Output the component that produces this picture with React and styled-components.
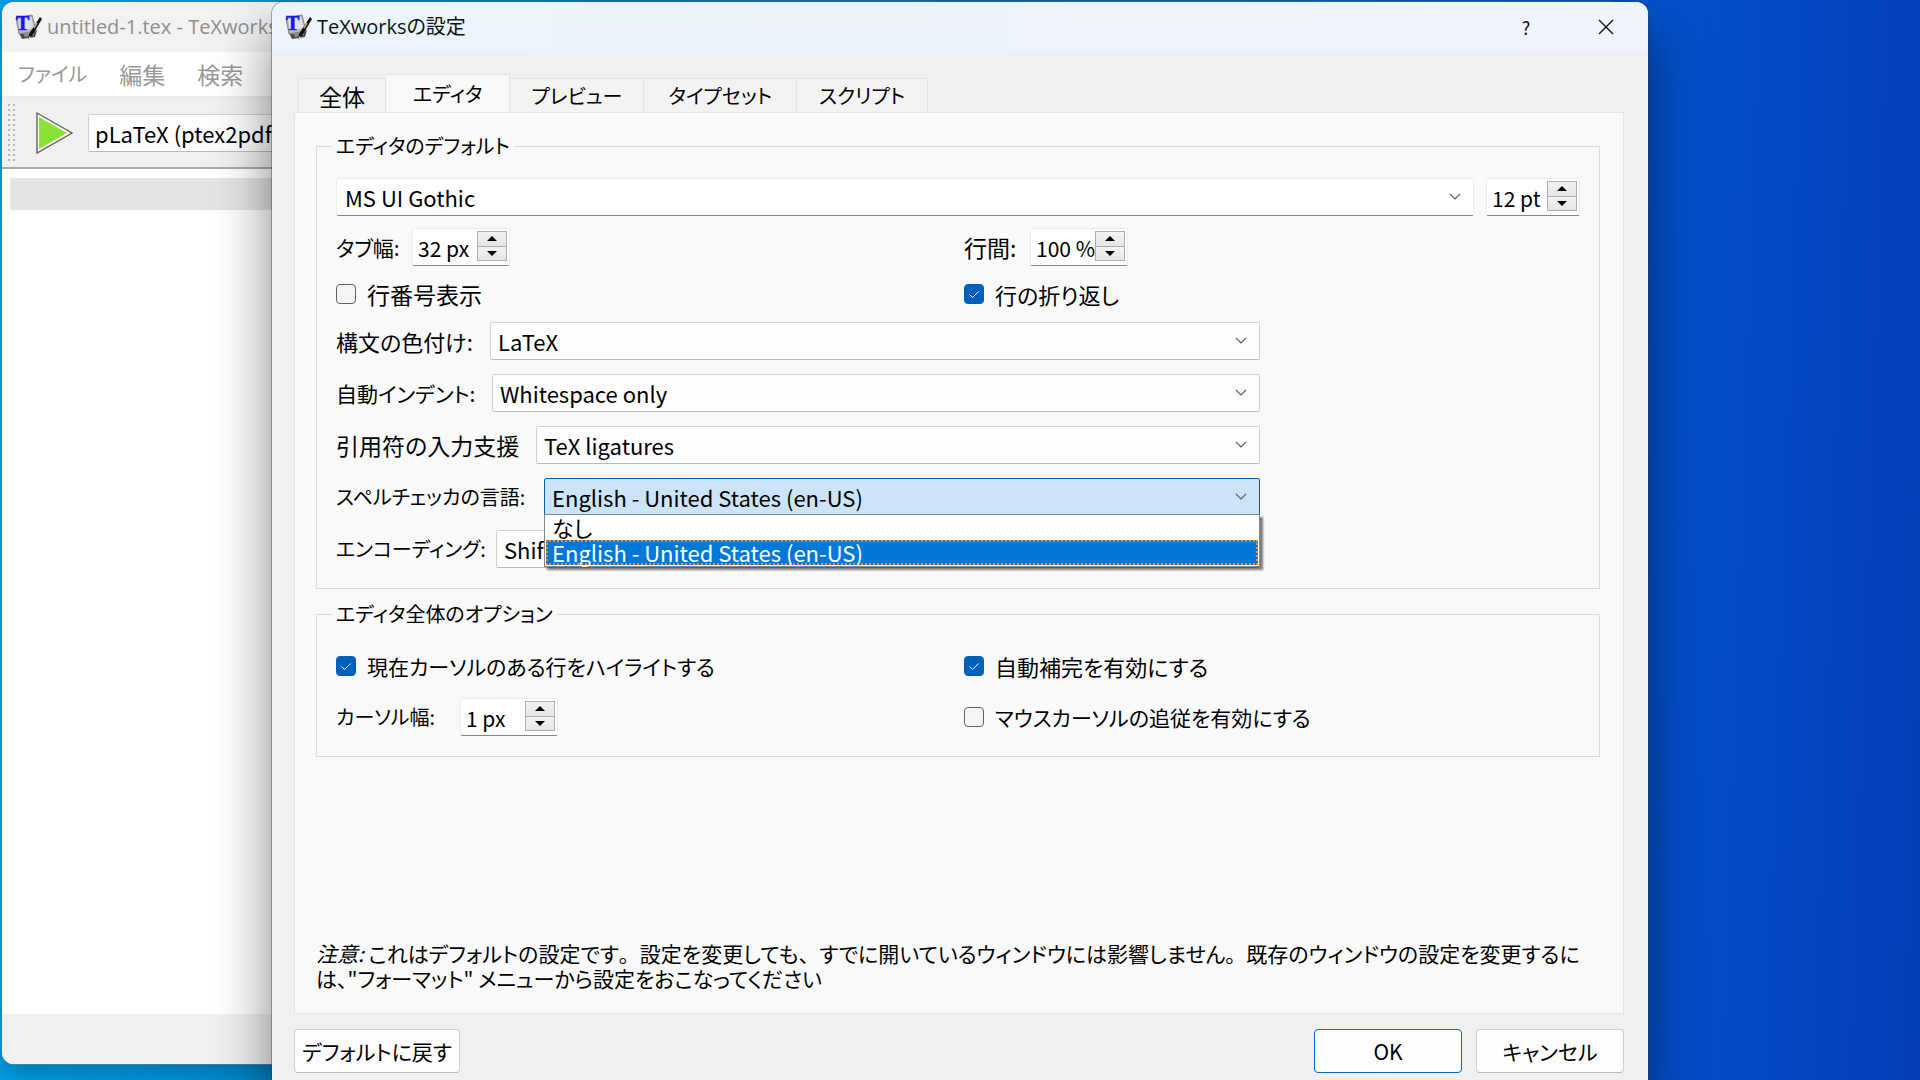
import React, { useState } from 'react';
import styled, { createGlobalStyle, css } from 'styled-components';

const SYNTAX = ['LaTeX', 'ConTeXt', 'BibTeX'];
const INDENT = ['Whitespace only', 'None'];
const QUOTES = ['TeX ligatures', 'Unicode characters'];
const ENCODINGS = ['Shift-JIS', 'UTF-8', 'EUC-JP'];
const LANGUAGES = ['なし', 'English - United States (en-US)'];

const TABS = [
	{ name: '全体', size: 23, pad: 20 },
	{ name: 'エディタ', size: 20, pad: 27 },
	{ name: 'プレビュー', size: 20, pad: 21 },
	{ name: 'タイプセット', size: 20, pad: 24 },
	{ name: 'スクリプト', size: 20, pad: 22 },
];

const AppIcon = () => (
	<Glyph width="28" height="28" viewBox="0 0 28 28" aria-hidden="true">
		<path d="M3 18 L7 26 L20 24 L22 17 Z" fill="#4c4c4c" />
		<path d="M8 20 L19 18 L19 22 L10 24 Z" fill="#8b8f93" />
		<path d="M1 5 L17 2 L21 18 L4 21 Z" fill="#b4b8bd" stroke="#84888c" strokeWidth="1" />
		<path d="M3 6 L16 4 L19 15 L5 18 Z" fill="#dfe1e4" />
		<text x="1" y="17" fontFamily="Liberation Serif, serif" fontWeight="bold" fontSize="20" fill="#1818e8" stroke="#1818e8" strokeWidth="0.6">T</text>
		<path d="M25 4 L27 6 L17 23 L13 26 L14 21 Z" fill="#111" />
		<path d="M22 10 L19 15" stroke="#c9b458" strokeWidth="1.5" />
		<path d="M14 23 L16 24 L13 27 Z" fill="#d8c069" />
	</Glyph>
);

const Chevron = () => (
	<ChevronSvg width="12" height="8" viewBox="0 0 12 8" aria-hidden="true">
		<path d="M1 1 L6 6 L11 1" fill="none" stroke="#5f5f5f" strokeWidth="1.2" />
	</ChevronSvg>
);

const Arrow = ({ down }) => (
	<Glyph width="10" height="5" viewBox="0 0 10 5" aria-hidden="true">
		<path d={down ? 'M0 0 H10 L5 5 Z' : 'M0 5 H10 L5 0 Z'} fill="#000" />
	</Glyph>
);

const Combo = ({ id, label, options, edit, open, value, children }) => (
	<ComboBox>
		<Select id={id} aria-label={label} $edit={edit} $open={open} defaultValue={value || options[0]}>
			{options.map(o => <option key={o}>{o}</option>)}
		</Select>
		<Chevron />
		{children}
	</ComboBox>
);

const Spin = ({ id, start, unit, width, label }) => {
	const [value, setValue] = useState(start);
	return (
		<SpinBox $width={width}>
			<SpinInput id={id} aria-label={label} value={value + ' ' + unit} onChange={e => setValue(parseInt(e.target.value) || 0)} />
			<SpinButtons>
				<SpinButton type="button" aria-label="増やす" onClick={() => setValue(value + 1)}><Arrow /></SpinButton>
				<SpinButton type="button" aria-label="減らす" onClick={() => setValue(value - 1)}><Arrow down /></SpinButton>
			</SpinButtons>
		</SpinBox>
	);
};

const Check = ({ children, checked, size }) => (
	<CheckLabel $size={size}>
		<CheckInput type="checkbox" defaultChecked={checked} />
		<span>{children}</span>
	</CheckLabel>
);

const EditorWindow = () => (
	<BackWindow>
		<TitleBar $inactive>
			<AppIcon />
			<Title>untitled-1.tex - TeXworks</Title>
		</TitleBar>
		<MenuBar>
			<MenuItem $size={20}>ファイル</MenuItem>
			<MenuItem $size={23}>編集</MenuItem>
			<MenuItem $size={23}>検索</MenuItem>
		</MenuBar>
		<Toolbar>
			<Grip />
			<RunButton type="button" aria-label="タイプセット">
				<Glyph width="38" height="44" viewBox="0 0 38 44">
					<path d="M1 2 L36 22 L1 42 Z" fill="#fff" stroke="#5d6652" strokeWidth="1.4" />
					<path d="M3 6 L31 22 L3 38 Z" fill="#8ae234" />
				</Glyph>
			</RunButton>
			<EngineSelect aria-label="タイプセットエンジン">
				<option>pLaTeX (ptex2pdf)</option>
			</EngineSelect>
		</Toolbar>
		<Document>
			<CurrentLine />
		</Document>
		<StatusBar />
	</BackWindow>
);

const Preferences = () => {
	const [lang, setLang] = useState(LANGUAGES[1]);

	return (
		<Dialog role="dialog" aria-label="TeXworksの設定">
			<TitleBar>
				<AppIcon />
				<Title>TeXworksの設定</Title>
				<WindowButton type="button" aria-label="ヘルプ">?</WindowButton>
				<WindowButton type="button" aria-label="閉じる">
					<Glyph width="16" height="16" viewBox="0 0 16 16">
						<path d="M1 1 L15 15 M15 1 L1 15" stroke="#111" strokeWidth="1.4" />
					</Glyph>
				</WindowButton>
			</TitleBar>

			<Body>
				<TabBar role="tablist">
					{TABS.map((t, i) => (
						<Tab key={t.name} type="button" role="tab" aria-selected={i === 1} $selected={i === 1} $size={t.size} $pad={t.pad}>{t.name}</Tab>
					))}
				</TabBar>

				<Panel role="tabpanel">
					<Group>
						<Legend>エディタのデフォルト</Legend>
						<Rows>
							<FontRow>
								<Combo edit options={['MS UI Gothic']} label="フォント" />
								<Spin start={12} unit="pt" width={94} label="フォントサイズ" />
							</FontRow>
							<Columns>
								<Field $gap={20}>
									<Label htmlFor="tab" $width={56}>タブ幅:</Label>
									<Spin id="tab" start={32} unit="px" width={98} />
								</Field>
								<Field $gap={12}>
									<Label htmlFor="spacing" $width={54} $size={23}>行間:</Label>
									<Spin id="spacing" start={100} unit="%" width={98} />
								</Field>
							</Columns>
							<Columns>
								<Check size={23}>行番号表示</Check>
								<Check size={22} checked>行の折り返し</Check>
							</Columns>
						</Rows>
						<ComboRows>
							<Field $gap={12}>
								<Label htmlFor="syntax" $width={142} $size={22}>構文の色付け:</Label>
								<Combo id="syntax" options={SYNTAX} />
							</Field>
							<Field $gap={12}>
								<Label htmlFor="indent" $width={144}>自動インデント:</Label>
								<Combo id="indent" options={INDENT} />
							</Field>
							<Field $gap={12}>
								<Label htmlFor="quotes" $width={188} $size={23}>引用符の入力支援</Label>
								<Combo id="quotes" options={QUOTES} />
							</Field>
							<Field $gap={12}>
								<Label htmlFor="lang" $width={196} $size={20}>スペルチェッカの言語:</Label>
								<Combo id="lang" options={LANGUAGES} value={LANGUAGES[1]} open>
									<Popup role="listbox">
										{LANGUAGES.map(l => (
											<Option key={l} role="option" aria-selected={l === lang} $selected={l === lang} onClick={() => setLang(l)}>{l}</Option>
										))}
									</Popup>
								</Combo>
							</Field>
							<Field $gap={12}>
								<Label htmlFor="encoding" $width={148} $size={20}>エンコーディング:</Label>
								<Combo id="encoding" options={ENCODINGS} />
							</Field>
						</ComboRows>
					</Group>

					<Group>
						<Legend>エディタ全体のオプション</Legend>
						<Columns $tall>
							<Check checked>現在カーソルのある行をハイライトする</Check>
							<Check size={22} checked>自動補完を有効にする</Check>
						</Columns>
						<Columns $spaced>
							<Field $gap={20}>
								<Label htmlFor="cursor" $width={104} $size={20}>カーソル幅:</Label>
								<Spin id="cursor" start={1} unit="px" width={98} />
							</Field>
							<Check>マウスカーソルの追従を有効にする</Check>
						</Columns>
					</Group>

					<Note>
						<em>注意:</em> これはデフォルトの設定です<Stop>。</Stop>設定を変更しても<Stop>、</Stop>すでに開いているウィンドウには影響しません<Stop>。</Stop>既存のウィンドウの設定を変更するに<br />
						は、"フォーマット" メニューから設定をおこなってください
					</Note>
				</Panel>

				<Footer>
					<Button type="button" $width={166}>デフォルトに戻す</Button>
					<Spacer />
					<Button type="button" $width={148} $primary>OK</Button>
					<Button type="button" $width={148}>キャンセル</Button>
				</Footer>
			</Body>
		</Dialog>
	);
};

const App = () => (
	<Desktop>
		<GlobalStyle />
		<EditorWindow />
		<Preferences />
	</Desktop>
);

const GlobalStyle = createGlobalStyle`
	* {
		box-sizing: border-box;
	}

	body {
		margin: 0;
		color: #000;
		font-family: "Noto Sans CJK JP", sans-serif;
		font-size: 21px;
		font-feature-settings: "palt";
	}

	button, input, select {
		margin: 0;
		color: inherit;
		font: inherit;
		font-feature-settings: inherit;
	}
`

const Desktop = styled.main`
	position: relative;
	min-height: 100vh;
	overflow: hidden;
	background: linear-gradient(92deg, #00a0e6 0%, #0090d8 14%, #0450cc 86%, #0446c2 93%, #033eb6 100%);
`

const Glyph = styled.svg`
	display: block;
	flex: none;
`

/* windows */

const windowFrame = css`
	position: absolute;
	top: 2px;
	display: flex;
	flex-direction: column;
	overflow: hidden;
`

const BackWindow = styled.section`
	${windowFrame}
	left: 2px;
	right: 300px;
	bottom: 16px;
	border-radius: 12px;
	background: #fff;
	box-shadow: 0 0 0 1px #3585b5, 0 8px 20px rgba(0, 0, 0, 0.25);
`

const Dialog = styled.section`
	${windowFrame}
	left: 272px;
	right: 272px;
	bottom: 0;
	border-radius: 12px 12px 0 0;
	background: #f0f0f0;
	box-shadow: 0 0 0 1px rgba(60, 60, 60, 0.4), 0 30px 56px rgba(0, 0, 0, 0.5);
`

const TitleBar = styled.header`
	display: flex;
	flex: none;
	align-items: center;
	gap: 4px;
	height: 50px;
	padding: 0 4px 1px 13px;
	color: ${p => p.$inactive ? '#8f8f8f' : '#111'};
	background: ${p => p.$inactive ? '#f2f2f2' : 'linear-gradient(90deg, #eaf4f9, #edf3f8 60%, #f0f3fb)'};
`

const Title = styled.h1`
	flex: 1;
	margin: 0;
	font-family: "Open Sans", "Noto Sans CJK JP", sans-serif;
	font-size: 20px;
	font-weight: 400;
	line-height: 28px;
	white-space: nowrap;
`

const WindowButton = styled.button`
	display: flex;
	align-items: center;
	justify-content: center;
	width: 76px;
	height: 44px;
	padding: 0;
	border: 0;
	font-size: 18px;
	background: none;
`

const MenuBar = styled.nav`
	display: flex;
	flex: none;
	align-items: center;
	gap: 32px;
	height: 46px;
	padding: 0 16px;
	border-bottom: 2px solid #ececec;
`

const MenuItem = styled.button`
	padding: 0;
	border: 0;
	color: #999;
	background: none;
	font-size: ${p => p.$size}px;
	line-height: 32px;
`

const Toolbar = styled.div`
	display: flex;
	flex: none;
	align-items: center;
	height: 71px;
	padding-left: 6px;
	border-bottom: 2px solid #a9a9a9;
	background: #f0f0f0;
`

const Grip = styled.div`
	width: 8px;
	height: 58px;
	background: radial-gradient(circle at 1px 1px, #b5b5b5 1px, transparent 1px) 0 0 / 5px 5px;
`

const RunButton = styled.button`
	margin-left: 20px;
	padding: 0;
	border: 0;
	background: none;
`

const fieldShape = css`
	height: 38px;
	border: 1px solid #d2d2d2;
	border-bottom-color: #bababa;
	border-radius: 2px;
	background: #fdfdfd;
	font-size: 22px;
	line-height: 32px;
	appearance: none;
	outline: none;
`

const EngineSelect = styled.select`
	${fieldShape}
	width: 300px;
	margin-left: 14px;
	padding: 0 6px;
`

const Document = styled.div`
	flex: 1;
	padding: 9px 8px;
`

const CurrentLine = styled.div`
	height: 32px;
	background: #e4e4e4;
`

const StatusBar = styled.footer`
	flex: none;
	height: 50px;
	background: #f0f0f0;
`

/* dialog contents */

const Body = styled.div`
	display: flex;
	flex: 1;
	flex-direction: column;
	padding: 0 24px 7px 22px;
`

const TabBar = styled.div`
	display: flex;
	align-items: flex-end;
	height: 60px;
	padding-left: 4px;
`

const Tab = styled.button`
	height: ${p => p.$selected ? 39 : 35}px;
	margin-bottom: -1px;
	padding: 0 ${p => p.$pad}px;
	border: 1px solid #e5e5e5;
	border-left-width: ${p => p.$selected ? 0 : 1}px;
	border-bottom-color: ${p => p.$selected ? '#f9f9f9' : '#e5e5e5'};
	background: ${p => p.$selected ? '#f9f9f9' : '#f3f3f3'};
	font-size: ${p => p.$size}px;
	line-height: 32px;
	white-space: nowrap;

	& + & {
		border-left-width: 0;
	}
`

const Panel = styled.div`
	display: flex;
	flex: 1;
	flex-direction: column;
	gap: 9px;
	padding: 17px 23px 22px 21px;
	border: 1px solid #e5e5e5;
	background: #f9f9f9;
`

const Group = styled.fieldset`
	min-width: 0;
	margin: 0;
	padding: 16px 19px 20px;
	border: 1px solid #dcdcdc;
`

const Legend = styled.legend`
	height: 32px;
	margin-left: -4px;
	padding: 0 4px;
	font-size: 20px;
	line-height: 32px;
`

const Rows = styled.div`
	display: flex;
	flex-direction: column;
	gap: 12px;
`

const ComboRows = styled.div`
	display: flex;
	flex-direction: column;
	gap: 14px;
	width: calc((100% - 12px) * 0.75);
	margin-top: 12px;
`

const FontRow = styled.div`
	display: flex;
	gap: 12px;
`

const Columns = styled.div`
	display: grid;
	grid-template-columns: 1fr 1fr;
	align-items: center;
	gap: 12px;
	min-height: ${p => p.$tall ? 40 : 32}px;
	margin-top: ${p => p.$spaced ? 12 : 0}px;
`

const Field = styled.div`
	display: flex;
	align-items: center;
	gap: ${p => p.$gap}px;
`

const Label = styled.label`
	flex: none;
	width: ${p => p.$width}px;
	font-size: ${p => p.$size || 21}px;
	line-height: 32px;
	white-space: nowrap;
`

const ComboBox = styled.div`
	position: relative;
	display: grid;
	flex: 1;
	min-width: 0;
`

const Select = styled.select`
	${fieldShape}
	grid-area: 1 / 1;
	width: 100%;
	padding: 0 30px 0 ${p => p.$edit ? 8 : 7}px;

	${p => p.$edit && css`
		border-color: #ececec #ececec #868686;
		background: #fff;
	`}

	${p => p.$open && css`
		border-color: #005fb8;
		background: #cce4f7;
	`}
`

const ChevronSvg = styled.svg`
	grid-area: 1 / 1;
	align-self: center;
	justify-self: end;
	margin-right: 13px;
	pointer-events: none;
`

const Popup = styled.ul`
	position: absolute;
	z-index: 2;
	top: 36px;
	left: 0;
	right: 0;
	margin: 0;
	padding: 0 1px 1px;
	border: 1px solid #828790;
	background: #fff;
	box-shadow: 3px 3px 2px rgba(0, 0, 0, 0.5);
	list-style: none;
`

const Option = styled.li`
	height: 25px;
	padding: 0 4px;
	border: 2px dotted ${p => p.$selected ? '#ff8728' : 'transparent'};
	color: ${p => p.$selected ? '#fff' : '#000'};
	background: ${p => p.$selected ? '#0078d7' : '#fff'};
	font-size: 22px;
	line-height: 20px;
	white-space: nowrap;
`

const SpinBox = styled.div`
	display: flex;
	flex: none;
	width: ${p => p.$width}px;
	height: 38px;
	padding: 2px 2px 0 5px;
	border: 1px solid #ececec;
	border-bottom-color: #868686;
	border-radius: 2px;
	background: #fff;
`

const SpinInput = styled.input`
	flex: 1;
	min-width: 0;
	height: 34px;
	padding: 0;
	border: 0;
	outline: 0;
	background: none;
	font-size: 21px;
`

const SpinButtons = styled.div`
	display: flex;
	flex-direction: column;
	width: 30px;
	height: 30px;
	border: 1px solid #adadad;
`

const SpinButton = styled.button`
	display: flex;
	flex: 1;
	align-items: center;
	justify-content: center;
	padding: 0;
	border: 0;
	background: linear-gradient(#f2f2f2, #e6e6e6);

	& + & {
		border-top: 1px solid #adadad;
	}
`

const CheckLabel = styled.label`
	display: flex;
	align-items: center;
	gap: 11px;
	font-size: ${p => p.$size || 21}px;
	line-height: 32px;
	white-space: nowrap;
`

const CheckInput = styled.input`
	flex: none;
	width: 20px;
	height: 20px;
	border: 1px solid #626262;
	border-radius: 4px;
	background: #f5f5f5;
	appearance: none;

	&:checked {
		border-color: #005fb8;
		background: #005fb8 url("data:image/svg+xml,%3Csvg xmlns='http://www.w3.org/2000/svg' viewBox='0 0 18 18'%3E%3Cpath d='M4.5 9.5l3 3 6-6' fill='none' stroke='white'/%3E%3C/svg%3E");
	}
`

const Note = styled.p`
	margin: auto 0 0;
	font-size: 21px;
	line-height: 25px;
`

/* punctuation that keeps its full width between sentences */
const Stop = styled.span`
	font-feature-settings: normal;
`

const Footer = styled.footer`
	display: flex;
	gap: 14px;
	padding-top: 15px;
`

const Spacer = styled.div`
	flex: 1;
`

const Button = styled.button`
	width: ${p => p.$width}px;
	height: 44px;
	padding: 0;
	border: 1px solid ${p => p.$primary ? '#0067c0' : '#d0d0d0'};
	border-bottom-color: ${p => p.$primary ? '#0067c0' : '#bababa'};
	border-radius: 4px;
	background: #fdfdfd;
	font-size: 21px;
	line-height: 32px;
	white-space: nowrap;
`

export default App;
